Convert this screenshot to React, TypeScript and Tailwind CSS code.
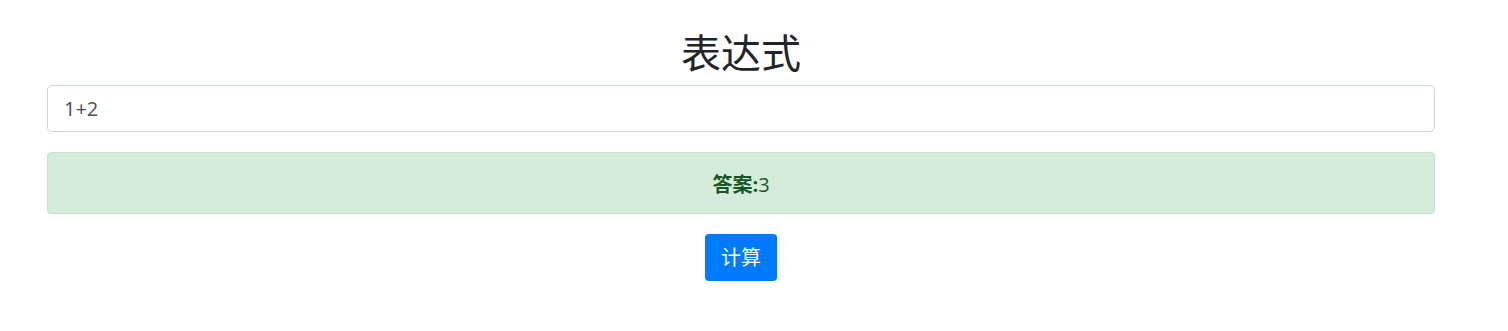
const font = "font-['Open_Sans','Noto_Sans_CJK_SC',sans-serif]"

export default function App() {
  return (
    <div className={`${font} min-h-[331px] bg-white`}>
      <div className="ml-[47px] w-[1388px] pt-[29px]">
        <h1 className="text-center text-[40px] leading-[48px] font-normal text-[#212529] mb-2">表达式</h1>
        <input
          className="block w-full h-[47px] px-4 text-[20px] text-[#495057] border border-[#ced4da] rounded-[5px] outline-none"
          defaultValue="1+2"
        />
        <div className="mt-[20px] h-[62px] pt-[3px] flex items-center justify-center bg-[#d4edda] border border-[#c3e6cb] rounded-[4px] text-[20px] text-[#155724]">
          <span>
            <b className="font-bold">答案:</b>3
          </span>
        </div>
        <div className="mt-[20px] flex justify-center">
          <button className="h-[47px] w-[72px] bg-[#007bff] text-white text-[20px] rounded-[4px] leading-none">
            计算
          </button>
        </div>
      </div>
    </div>
  )
}
